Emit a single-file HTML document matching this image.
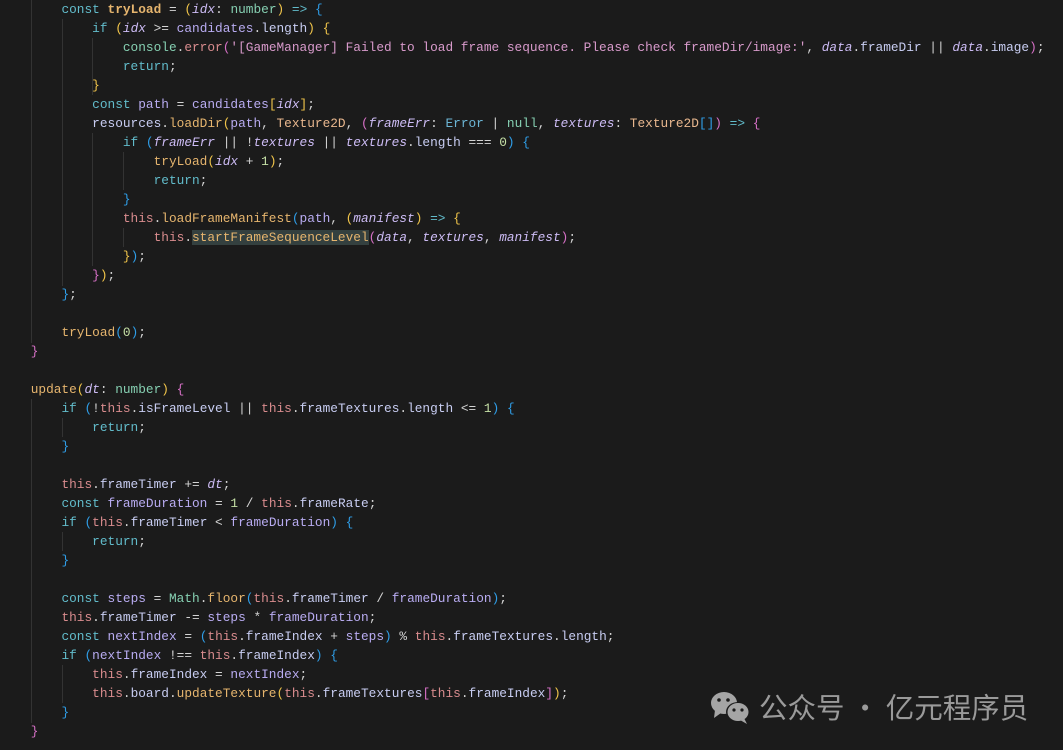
<!DOCTYPE html>
<html><head><meta charset="utf-8"><style>
html,body{margin:0;padding:0;background:#1b1b1b;width:1063px;height:750px;overflow:hidden}
pre{margin:0;position:absolute;left:0;top:0;font-family:"Liberation Mono",monospace;font-size:12.8px;line-height:19px;color:#d4d4d4;white-space:pre}
.k{color:#62bccb}.f{color:#e6b56e}.b{font-weight:bold}.t{color:#86d0b2}.p{color:#cdbcf5;font-style:italic}
.v{color:#b9acf2}.th{color:#d98c8e}.pr{color:#c8cdf2}.s{color:#d89acb}.c{color:#e8b78e}.e{color:#6cb6d6}
.n{color:#c5e0a6}.y{color:#f0c44a}.m{color:#d670c6}.bl{color:#2f9ee8}.hl{background:#34403f}
.g{position:absolute;width:1px;background:#333}
.wm{position:absolute;left:759px;top:688px;font-family:"Noto Sans CJK SC",sans-serif;font-size:28.5px;color:#9a9a9a;line-height:38px;white-space:nowrap}
</style></head><body>
<div class="g" style="left:31px;top:0;height:343px"></div>
<div class="g" style="left:62px;top:19px;height:267px"></div>
<div class="g" style="left:92px;top:38px;height:57px"></div>
<div class="g" style="left:92px;top:133px;height:133px"></div>
<div class="g" style="left:123px;top:152px;height:38px"></div>
<div class="g" style="left:123px;top:228px;height:19px"></div>
<div class="g" style="left:31px;top:399px;height:324px"></div>
<div class="g" style="left:62px;top:418px;height:19px"></div>
<div class="g" style="left:62px;top:532px;height:19px"></div>
<div class="g" style="left:62px;top:665px;height:38px"></div>
<pre>        <span class="k">const</span> <span class="f b">tryLoad</span> = <span class="y">(</span><span class="p">idx</span>: <span class="t">number</span><span class="y">)</span> <span class="k">=&gt;</span> <span class="bl">{</span>
            <span class="k">if</span> <span class="y">(</span><span class="p">idx</span> &gt;= <span class="v">candidates</span>.<span class="pr">length</span><span class="y">)</span> <span class="y">{</span>
                <span class="t">console</span>.<span class="th">error</span><span class="m">(</span><span class="s">'[GameManager] Failed to load frame sequence. Please check frameDir/image:'</span>, <span class="p">data</span>.<span class="pr">frameDir</span> || <span class="p">data</span>.<span class="pr">image</span><span class="m">)</span>;
                <span class="k">return</span>;
            <span class="y">}</span>
            <span class="k">const</span> <span class="v">path</span> = <span class="v">candidates</span><span class="y">[</span><span class="p">idx</span><span class="y">]</span>;
            <span class="pr">resources</span>.<span class="f">loadDir</span><span class="y">(</span><span class="v">path</span>, <span class="c">Texture2D</span>, <span class="m">(</span><span class="p">frameErr</span>: <span class="e">Error</span> | <span class="t">null</span>, <span class="p">textures</span>: <span class="c">Texture2D</span><span class="bl">[]</span><span class="m">)</span> <span class="k">=&gt;</span> <span class="m">{</span>
                <span class="k">if</span> <span class="bl">(</span><span class="p">frameErr</span> || !<span class="p">textures</span> || <span class="p">textures</span>.<span class="pr">length</span> === <span class="n">0</span><span class="bl">)</span> <span class="bl">{</span>
                    <span class="f">tryLoad</span><span class="y">(</span><span class="p">idx</span> + <span class="n">1</span><span class="y">)</span>;
                    <span class="k">return</span>;
                <span class="bl">}</span>
                <span class="th">this</span>.<span class="f">loadFrameManifest</span><span class="bl">(</span><span class="v">path</span>, <span class="y">(</span><span class="p">manifest</span><span class="y">)</span> <span class="k">=&gt;</span> <span class="y">{</span>
                    <span class="th">this</span>.<span class="f hl">startFrameSequenceLevel</span><span class="m">(</span><span class="p">data</span>, <span class="p">textures</span>, <span class="p">manifest</span><span class="m">)</span>;
                <span class="y">}</span><span class="bl">)</span>;
            <span class="m">}</span><span class="y">)</span>;
        <span class="bl">}</span>;

        <span class="f">tryLoad</span><span class="bl">(</span><span class="n">0</span><span class="bl">)</span>;
    <span class="m">}</span>

    <span class="f">update</span><span class="y">(</span><span class="p">dt</span>: <span class="t">number</span><span class="y">)</span> <span class="m">{</span>
        <span class="k">if</span> <span class="bl">(</span>!<span class="th">this</span>.<span class="pr">isFrameLevel</span> || <span class="th">this</span>.<span class="pr">frameTextures</span>.<span class="pr">length</span> &lt;= <span class="n">1</span><span class="bl">)</span> <span class="bl">{</span>
            <span class="k">return</span>;
        <span class="bl">}</span>

        <span class="th">this</span>.<span class="pr">frameTimer</span> += <span class="p">dt</span>;
        <span class="k">const</span> <span class="v">frameDuration</span> = <span class="n">1</span> / <span class="th">this</span>.<span class="pr">frameRate</span>;
        <span class="k">if</span> <span class="bl">(</span><span class="th">this</span>.<span class="pr">frameTimer</span> &lt; <span class="v">frameDuration</span><span class="bl">)</span> <span class="bl">{</span>
            <span class="k">return</span>;
        <span class="bl">}</span>

        <span class="k">const</span> <span class="v">steps</span> = <span class="t">Math</span>.<span class="f">floor</span><span class="bl">(</span><span class="th">this</span>.<span class="pr">frameTimer</span> / <span class="v">frameDuration</span><span class="bl">)</span>;
        <span class="th">this</span>.<span class="pr">frameTimer</span> -= <span class="v">steps</span> * <span class="v">frameDuration</span>;
        <span class="k">const</span> <span class="v">nextIndex</span> = <span class="bl">(</span><span class="th">this</span>.<span class="pr">frameIndex</span> + <span class="v">steps</span><span class="bl">)</span> % <span class="th">this</span>.<span class="pr">frameTextures</span>.<span class="pr">length</span>;
        <span class="k">if</span> <span class="bl">(</span><span class="v">nextIndex</span> !== <span class="th">this</span>.<span class="pr">frameIndex</span><span class="bl">)</span> <span class="bl">{</span>
            <span class="th">this</span>.<span class="pr">frameIndex</span> = <span class="v">nextIndex</span>;
            <span class="th">this</span>.<span class="pr">board</span>.<span class="f">updateTexture</span><span class="y">(</span><span class="th">this</span>.<span class="pr">frameTextures</span><span class="m">[</span><span class="th">this</span>.<span class="pr">frameIndex</span><span class="m">]</span><span class="y">)</span>;
        <span class="bl">}</span>
    <span class="m">}</span></pre>
<svg style="position:absolute;left:709px;top:690px" width="44" height="36" viewBox="0 0 44 36">
<ellipse cx="15" cy="13" rx="13" ry="11" fill="#a5a5a5"/>
<path d="M6 20 L5 28 L12 23 Z" fill="#a5a5a5"/>
<ellipse cx="29" cy="22" rx="12" ry="10" fill="#1b1b1b"/>
<ellipse cx="29" cy="22" rx="10.5" ry="9" fill="#a5a5a5"/>
<path d="M35 28 L38 34 L31 30 Z" fill="#a5a5a5"/>
<circle cx="10" cy="10" r="1.8" fill="#1b1b1b"/><circle cx="19" cy="10" r="1.8" fill="#1b1b1b"/>
<circle cx="25" cy="20" r="1.6" fill="#1b1b1b"/><circle cx="33" cy="20" r="1.6" fill="#1b1b1b"/>
</svg>
<div class="wm">公众号 · 亿元程序员</div>
</body></html>
